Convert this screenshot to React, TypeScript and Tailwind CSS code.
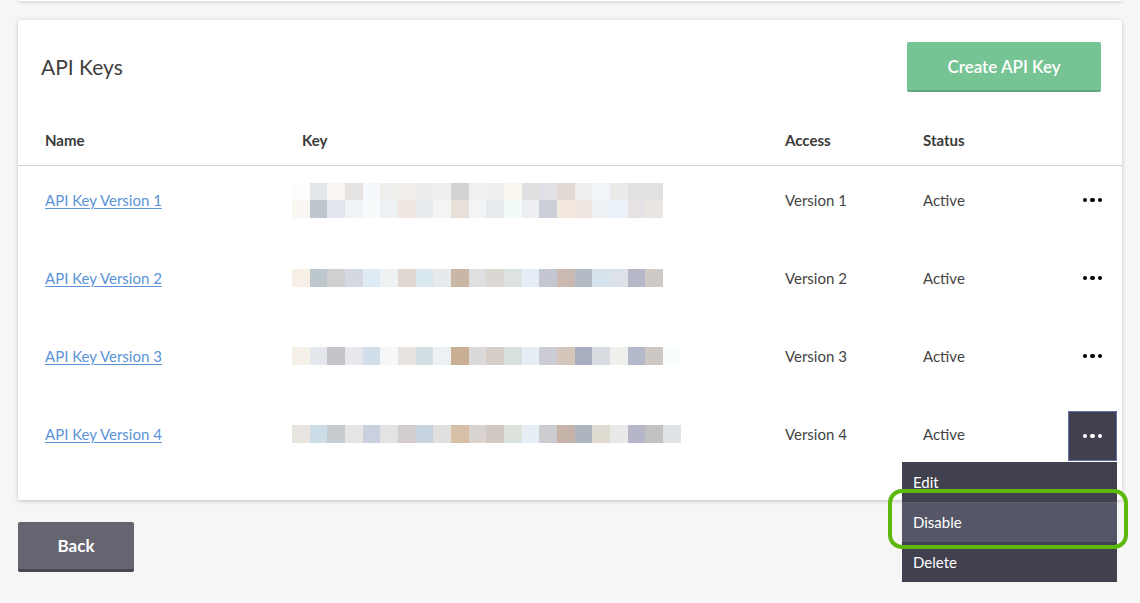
import React from "react";

type KeyRow = { name: string; access: string; cells: string[][] };

const ROWS: KeyRow[] = [
  {
    name: "API Key Version 1",
    access: "Version 1",
    cells: [
      ["#fdfdfb", "#e3e6e9", "#faf7f2", "#e6e4e2", "#f5f9fd", "#efefed", "#f2efeb", "#ebecee", "#efefef", "#d4d3d1", "#eff0f0", "#efefef", "#faf7f0", "#dfe1e0", "#e0e1e6", "#e2d9d3", "#eeeff1", "#f1f4f8", "#ebecea", "#e3e0e4", "#e0e1e3"],
      ["#faf7f2", "#c0c6cd", "#e2e6ee", "#f1f4f7", "#f8fbfc", "#eff2f4", "#f0e7e3", "#e9ecee", "#f4f4f2", "#e8e0d8", "#f2f4f5", "#e7ebee", "#f3fbfa", "#eceef2", "#ccced8", "#f2e8e0", "#efe6e1", "#ecf1f6", "#ebf1f8", "#e5e1e5", "#ebe6e3"],
    ],
  },
  {
    name: "API Key Version 2",
    access: "Version 2",
    cells: [
      ["#f7f0e6", "#bdc8cc", "#d2cfd0", "#d4d8e0", "#deeaf4", "#eff2f3", "#e0d7d3", "#d9e7ee", "#e6eaed", "#c9b6a4", "#dedfe1", "#dbd8d3", "#dde3e2", "#e5edf6", "#c4c6d2", "#c9b9b0", "#b5bbc5", "#d6e2ec", "#dce2e8", "#b6b8c8", "#cfcac6"],
    ],
  },
  {
    name: "API Key Version 3",
    access: "Version 3",
    cells: [
      ["#f5f1e9", "#e4e7eb", "#c6c4c8", "#e7e8ec", "#d1dfeb", "#f6f7f8", "#e6e2e0", "#d3dfe5", "#edf1f4", "#cab092", "#dcd9db", "#d6cdc7", "#d7e0df", "#e6eef6", "#cbccd6", "#d4c6ba", "#a9adc0", "#d8dce0", "#eff0ec", "#b3b9cb", "#cec8c5", "#f9fcfd"],
    ],
  },
  {
    name: "API Key Version 4",
    access: "Version 4",
    cells: [
      ["#e8e4df", "#ccdde7", "#c6ccd0", "#e7e5e3", "#cad1de", "#e3e3e3", "#d3cdd1", "#c7d3de", "#e0e0df", "#d8bfa8", "#d9d4d0", "#d3c9c4", "#dce2dc", "#e8eef5", "#cccbd0", "#c6b3aa", "#afb5bf", "#dfdbd0", "#e9e9e9", "#b5b7c8", "#c2c2c2", "#e0e3e6"],
    ],
  },
];

const Dots: React.FC<{ light?: boolean }> = ({ light }) => (
  <span className="flex gap-[3px]">
    {[0, 1, 2].map((i) => (
      <span key={i} className={`block w-[4.5px] h-[4.5px] rounded-full ${light ? "bg-white" : "bg-black"}`} />
    ))}
  </span>
);

const BlurredKey: React.FC<{ cells: string[][] }> = ({ cells }) => (
  <div className="flex flex-col -ml-[10px]">
    {cells.map((line, i) => (
      <div key={i} className="flex">
        {line.map((c, j) => (
          <span key={j} className="block w-[17.68px] h-[17.5px]" style={{ backgroundColor: c }} />
        ))}
      </div>
    ))}
  </div>
);

export default function App() {
  return (
    <div className="min-h-screen bg-[#f6f6f6] px-[18px] font-['Lato',sans-serif]">
      <div className="h-px bg-white shadow-[0_1px_3px_rgba(0,0,0,0.3)]" />

      <div className="mt-[19px] bg-white rounded-[2px] shadow-[0_1px_4px_rgba(0,0,0,0.22)]">
        <div className="flex items-center justify-between pt-[22px] pl-[23px] pr-[21px]">
          <h2 className="text-[21px] text-[#3f3f3f]">API Keys</h2>
          <button className="w-[194px] h-[50px] rounded-[2px] bg-[#76c394] border-b-2 border-[#5fa57b] text-white text-[17px] font-semibold pt-[2px]">
            Create API Key
          </button>
        </div>

        <div className="grid grid-cols-[257px_483px_138px_1fr_49px] pl-[27px] pr-[5px] pt-[38px] pb-[15px] border-b border-[#d3d3d3] text-[15px] font-bold text-[#3a3a3a] leading-5">
          <span>Name</span>
          <span>Key</span>
          <span>Access</span>
          <span>Status</span>
          <span />
        </div>

        <div className="flex flex-col gap-[28px] pt-[9px] pb-[41px] pl-[27px] pr-[5px]">
          {ROWS.map((row, i) => {
            const open = i === ROWS.length - 1;
            return (
              <div key={row.name} className="grid grid-cols-[257px_483px_138px_1fr_49px] items-center h-[50px] text-[15px] text-[#444]">
                <a href="#" className="text-[#5b93d8] underline underline-offset-2">{row.name}</a>
                <BlurredKey cells={row.cells} />
                <span>{row.access}</span>
                <span>Active</span>
                <div className="relative h-[50px]">
                  <button
                    className={`flex items-center justify-center w-[49px] h-[50px] ${open ? "bg-[#40404e] border border-[#6371a8] translate-y-[2px]" : ""}`}
                  >
                    <Dots light={open} />
                  </button>
                  {open && (
                    <div className="absolute right-0 top-[53px] w-[215px] bg-[#40404e] text-white text-[15px] z-10">
                      <div className="h-[40px] flex items-center pl-[11px]">Edit</div>
                      <div className="h-[40px] flex items-center pl-[11px] bg-[#555668] border-t border-[#5e5f70]">Disable</div>
                      <div className="h-[40px] flex items-center pl-[11px]">Delete</div>
                      <div className="absolute left-[-14px] top-[27px] w-[240px] h-[60px] border-[4px] border-[#5cb80a] rounded-[14px]" />
                    </div>
                  )}
                </div>
              </div>
            );
          })}
        </div>
      </div>

      <button className="mt-[22px] w-[116px] h-[50px] rounded-[2px] bg-[#656571] border-b-[3px] border-[#484854] text-white text-[17px] font-bold">
        Back
      </button>
    </div>
  );
}
